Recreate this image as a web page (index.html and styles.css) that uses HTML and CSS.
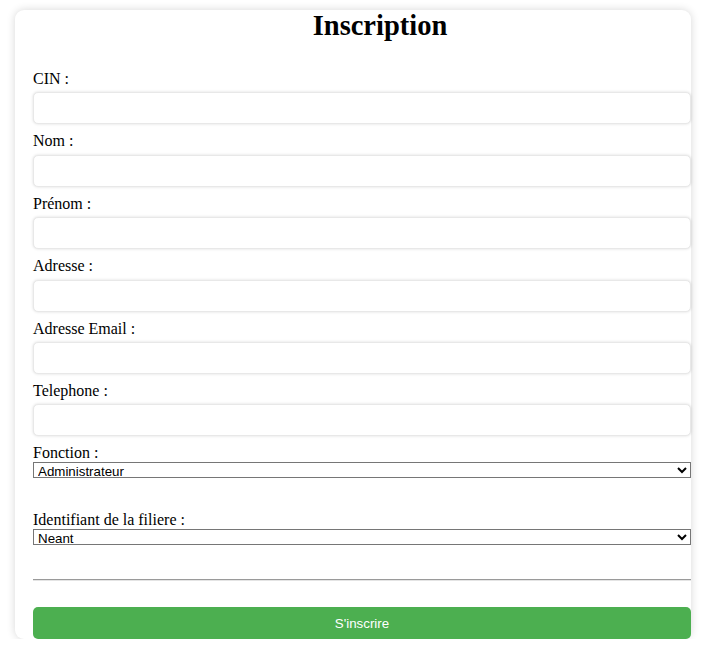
FILE: index.html
```html
<!DOCTYPE html>
<html lang="fr">
<head>
<meta charset="utf-8">
<title>Inscription</title>
<link rel="stylesheet" href="styles.css">
</head>
<body>
<div class="card">
  <h2 class="title">Inscription</h2>
  <form class="form">
    <label class="label" for="cin">CIN :</label>
    <input class="field" id="cin" type="text">
    <label class="label" for="nom">Nom :</label>
    <input class="field" id="nom" type="text">
    <label class="label" for="prenom">Prénom :</label>
    <input class="field" id="prenom" type="text">
    <label class="label" for="adresse">Adresse :</label>
    <input class="field" id="adresse" type="text">
    <label class="label" for="email">Adresse Email :</label>
    <input class="field" id="email" type="email">
    <label class="label" for="tel">Telephone :</label>
    <input class="field" id="tel" type="text">
    <label class="label" for="fonction">Fonction :</label>
    <select class="choice" id="fonction">
      <option>Administrateur</option>
    </select>
    <label class="label" for="filiere">Identifiant de la filiere :</label>
    <select class="choice" id="filiere">
      <option>Neant</option>
    </select>
    <hr class="rule">
    <button class="submit" type="button">S'inscrire</button>
  </form>
</div>
</body>
</html>
```
FILE: styles.css
```css
html, body {
  margin: 0;
  padding: 0;
  background: #ffffff;
}

body {
  font-family: "Liberation Serif", "Times New Roman", serif;
  font-size: 16px;
  color: #000;
}

.card {
  box-sizing: border-box;
  width: 676px;
  height: 629px;
  margin: 10px 0 0 15px;
  padding: 0 0 0 18px;
  background: #fff;
  border-radius: 9px;
  box-shadow: 0 0 8px rgba(0, 0, 0, 0.16);
}

.title {
  margin: 0 0 29px 0;
  padding-left: 36px;
  text-align: center;
  font-size: 28.5px;
  font-weight: bold;
  line-height: 31px;
}

.form {
  display: flex;
  flex-direction: column;
}

.label {
  display: block;
  line-height: 18.4px;
}

.field {
  box-sizing: border-box;
  width: 658px;
  height: 32px;
  margin: 4px 0 8px 0;
  padding: 8px;
  border: 1px solid #e8e8e8;
  border-radius: 5px;
  box-shadow: 0 0 3px rgba(0, 0, 0, 0.14);
  background: #fff;
  font-family: "Liberation Sans", Arial, sans-serif;
  font-size: 13.33px;
}

.choice {
  box-sizing: border-box;
  width: 658px;
  height: 16px;
  margin: -0.5px 0 33px 0;
  padding: 0;
  border: 1px solid #767676;
  border-radius: 0;
  background: #fff;
  color: #000;
  font-family: "Liberation Sans", Arial, sans-serif;
  font-size: 13.33px;
}

.rule {
  width: 658px;
  margin: 1px 0 26px 0;
  border: 0;
  border-top: 1px solid #9a9a9a;
  border-bottom: 1px solid #e4e4e4;
  height: 0;
}

.submit {
  width: 658px;
  height: 32px;
  border: none;
  border-radius: 5px;
  background: #4caf50;
  color: #fff;
  font-family: "Liberation Sans", Arial, sans-serif;
  font-size: 13.33px;
  cursor: pointer;
}
```
